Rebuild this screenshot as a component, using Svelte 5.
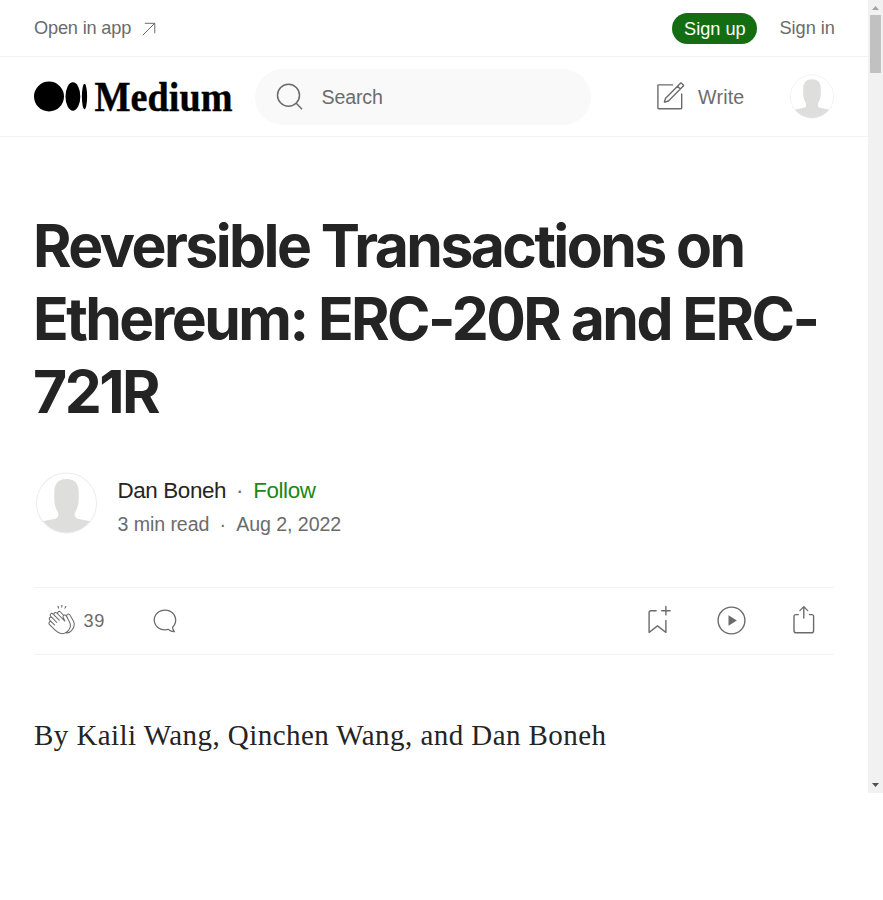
<script>
  const titleLines = ['Reversible Transactions on', 'Ethereum: ERC-20R and ERC-', '721R'];
</script>

{#snippet avatar()}
  <svg class="avatar" viewBox="0 0 60 60" aria-hidden="true">
    <defs><clipPath id="round"><circle cx="30" cy="30" r="29.5" /></clipPath></defs>
    <circle cx="30" cy="30" r="29.5" fill="#fff" />
    <path clip-path="url(#round)" fill="#dededd" d="M30 6.500c-8.500 0-12 5-12 13 0 6-.5 13 3 18.500 1.500 3 1.500 6-2 7.500L4 48.500v13h52v-13L41 45.500c-3.500-1.500-3.500-4.500-2-7.500 3.500-5.500 3-12.500 3-18.500 0-8-3.500-13-12-13z" />
    <circle cx="30" cy="30" r="29.500" fill="none" stroke="#ededed" />
  </svg>
{/snippet}

<div class="window">
  <div class="page">
    <header>
      <div class="topbar">
        <a class="open" href="#app">Open in app
          <svg width="14" height="14" viewBox="0 0 14 14"><path d="M.8 13.200L12.500 1.500M2.800 1.300h10v10" fill="none" stroke="currentColor" /></svg>
        </a>
        <nav><button class="signup">Sign up</button><a href="#signin">Sign in</a></nav>
      </div>
      <div class="mainbar">
        <svg class="logo" width="204" height="56" viewBox="0 -8 204 56">
          <circle cx="15" cy="19.500" r="15" />
          <ellipse cx="38.900" cy="19.500" rx="7.400" ry="14.200" />
          <ellipse cx="50.500" cy="19.500" rx="2.600" ry="12.700" />
          <text x="60.500" y="33.500" textLength="138" lengthAdjust="spacingAndGlyphs">Medium</text>
        </svg>
        <div class="search">
          <svg width="34" height="34" viewBox="0 0 34 34"><g fill="none" stroke="currentColor" stroke-width="1.500"><circle cx="15.500" cy="15.200" r="11" /><path d="M23 23l6 6.300" /></g></svg>
          <span>Search</span>
        </div>
        <div class="write">
          <svg width="33.600" height="33.600" viewBox="0 0 24 24">
            <path fill="currentColor" d="M14 4a.5.5 0 0 0 0-1v1zm7 6a.5.5 0 0 0-1 0h1zm-7-7H4v1h10V3zM3 4v16h1V4H3zm1 17h16v-1H4v1zm17-1V10h-1v10h1zm-1 1a1 1 0 0 0 1-1h-1v1zM3 20a1 1 0 0 0 1 1v-1H3zM4 3a1 1 0 0 0-1 1h1V3z" />
            <path fill="none" stroke="currentColor" d="M17.500 4.500l-8.460 8.460a.25.25 0 0 0-.06.1l-.82 2.470c-.07.2.12.38.31.31l2.470-.82a.25.25 0 0 0 .1-.06L19.500 6.500m-2-2l2.320-2.320c.1-.1.26-.1.36 0l1.640 1.640c.1.1.1.26 0 .36L19.500 6.500m-2-2l2 2" />
          </svg>
          <span>Write</span>
        </div>
        <div class="me">{@render avatar()}</div>
      </div>
    </header>

    <article>
      <h1>{#each titleLines as line}<span>{line}</span>{/each}</h1>
      <div class="byline">
        <div class="author">{@render avatar()}</div>
        <div class="details">
          <p class="name"><span>Dan Boneh</span><i>·</i><a class="follow" href="#follow">Follow</a></p>
          <p class="meta"><span>3 min read</span><i>·</i><span>Aug 2, 2022</span></p>
        </div>
      </div>
      <div class="actions">
        <svg class="clap" width="33.600" height="33.600" viewBox="0 0 24 24"><path fill="currentColor" fill-rule="evenodd" d="M11.370.83L12 3.280l.63-2.450h-1.260zM13.920 3.950l1.520-2.100-1.180-.4-.34 2.500zM8.590 1.840l1.520 2.110-.34-2.500-1.180.4zM18.520 18.920a4.230 4.230 0 0 1-2.620 1.330l.41-.37c2.390-2.400 2.860-4.950 1.400-7.630l-.91-1.600-.8-1.670c-.25-.56-.19-.98.21-1.290a.7.7 0 0 1 .55-.13c.28.05.54.23.72.5l2.370 4.160c.97 1.620 1.140 4.230-1.330 6.700zm-11-.44l-4.150-4.150a.83.83 0 0 1 1.170-1.170l2.160 2.160a.37.37 0 0 0 .51-.52l-2.150-2.160L3.600 11.200a.83.83 0 0 1 1.170-1.170l3.430 3.440a.36.36 0 0 0 .52 0 .36.36 0 0 0 0-.52L5.290 9.510l-.97-.97a.83.83 0 0 1 0-1.160.84.84 0 0 1 1.170 0l.97.97 3.440 3.430a.36.36 0 0 0 .51 0 .37.37 0 0 0 0-.52L6.980 7.830a.82.82 0 0 1-.18-.9.82.82 0 0 1 .76-.51c.22 0 .43.09.58.24l5.800 5.790a.37.37 0 0 0 .58-.42L13.400 9.670c-.26-.56-.2-.98.2-1.290a.7.7 0 0 1 .55-.13c.28.05.55.23.73.5l2.200 3.860c1.300 2.380.87 4.590-1.290 6.750a4.650 4.650 0 0 1-4.190 1.370 7.730 7.730 0 0 1-4.070-2.250zm3.230-12.500l2.120 2.110c-.41.5-.47 1.170-.13 1.900l.22.46-3.520-3.530a.81.81 0 0 1-.1-.36c0-.23.09-.43.24-.59a.85.85 0 0 1 1.170 0zm7.360 1.700a1.860 1.860 0 0 0-1.230-.84 1.440 1.440 0 0 0-1.120.27c-.3.24-.5.55-.58.89-.25-.25-.57-.4-.91-.47-.28-.04-.56 0-.82.1l-2.180-2.180a1.560 1.560 0 0 0-2.200 0c-.2.2-.33.44-.4.7a1.560 1.560 0 0 0-2.630.75 1.600 1.600 0 0 0-2.230-.04 1.560 1.560 0 0 0 0 2.200c-.24.1-.5.24-.72.45a1.560 1.560 0 0 0 0 2.200l.52.52a1.560 1.560 0 0 0-.75 2.610L7 19a8.460 8.460 0 0 0 4.480 2.450 5.180 5.180 0 0 0 3.360-.5 4.890 4.890 0 0 0 4.200-1.510c2.750-2.770 2.540-5.740 1.430-7.590L18.100 7.680z" /></svg>
        <span class="count">39</span>
        <svg class="comment" width="33.600" height="33.600" viewBox="0 0 24 24"><path fill="currentColor" d="M18 16.800a7.140 7.140 0 0 0 2.240-5.320c0-4.120-3.530-7.480-8.050-7.480C7.670 4 4 7.360 4 11.480c0 4.130 3.670 7.480 8.200 7.480a8.900 8.900 0 0 0 2.380-.32c.23.2.48.39.75.56 1.060.69 2.200 1.040 3.400 1.040.22 0 .4-.11.48-.29a.5.5 0 0 0-.04-.52 6.400 6.400 0 0 1-1.160-2.650v.02zm-3.120 1.060l-.06-.22-.32.1a8 8 0 0 1-2.300.33c-4.030 0-7.300-2.960-7.300-6.590S8.170 4.900 12.200 4.900c4 0 7.100 2.960 7.100 6.600 0 1.800-.6 3.470-2.020 4.720l-.2.16v.26l.02.3a6.740 6.740 0 0 0 .88 2.400 5.270 5.270 0 0 1-2.170-.86c-.28-.17-.72-.38-.94-.59l.01-.02z" /></svg>
        <div class="tools">
          <svg width="35" height="35" viewBox="0 0 25 25"><path fill="currentColor" d="M18 2.500a.5.5 0 0 1 1 0V5h2.500a.5.5 0 0 1 0 1H19v2.500a.5.5 0 1 1-1 0V6h-2.500a.5.5 0 0 1 0-1H18V2.500zM7 7a1 1 0 0 1 1-1h3.500a.5.5 0 0 0 0-1H8a2 2 0 0 0-2 2v14a.5.5 0 0 0 .8.4l5.700-4.400 5.700 4.400a.5.5 0 0 0 .8-.4v-8.500a.5.5 0 0 0-1 0v7.480l-5.200-4a.5.5 0 0 0-.6 0l-5.200 4V7z" /></svg>
          <svg width="35" height="35" viewBox="0 0 35 35"><circle cx="17.500" cy="17.500" r="13.400" fill="none" stroke="currentColor" stroke-width="1.400" /><path fill="currentColor" d="M14.500 12.200v10.600l8.300-5.300z" /></svg>
          <svg width="33.600" height="33.600" viewBox="0 0 24 24"><path fill="currentColor" fill-rule="evenodd" d="M15.220 4.930a.42.42 0 0 1-.12.13h.01a.45.45 0 0 1-.29.08.52.52 0 0 1-.3-.13L12.500 3v7.070a.5.5 0 0 1-.5.5.5.5 0 0 1-.5-.5V3.020l-2 2a.45.45 0 0 1-.57.04h-.02a.4.4 0 0 1-.16-.3.4.4 0 0 1 .1-.32l2.800-2.800a.5.5 0 0 1 .7 0l2.800 2.790a.42.42 0 0 1 .08.5zm.78 2.140h1.500a2 2 0 0 1 2 2v10a2 2 0 0 1-2 2h-11a2 2 0 0 1-2-2v-10a2 2 0 0 1 2-2H8a.5.5 0 0 1 .35.14c.1.1.15.22.15.35a.5.5 0 0 1-.15.35.5.5 0 0 1-.35.15H6.400c-.5 0-.9.4-.9.9v10.200a.9.9 0 0 0 .9.9h11.200c.5 0 .9-.4.9-.9V8.960c0-.5-.4-.9-.9-.9H16a.5.5 0 0 1 0-1z" /></svg>
        </div>
      </div>
      <p class="body">By Kaili Wang, Qinchen Wang, and Dan Boneh</p>
    </article>
  </div>
  <div class="scrollbar">
    <svg width="15" height="15" viewBox="0 0 15 15"><path fill="#a3a3a3" d="M4 10h7L7.500 6z" /></svg>
    <div class="thumb"></div>
    <svg width="15" height="15" viewBox="0 0 15 15"><path fill="#505050" d="M4 5h7L7.500 9z" /></svg>
  </div>
</div>

<style>
  :global(body) { background: #fff; }
  .window { display: flex; width: 883px; height: 793px; overflow: hidden; font-family: "Liberation Sans", Arial, sans-serif; color: #242424; }
  .page { width: 868px; flex: none; }
  svg { display: block; flex: none; }
  a { color: inherit; text-decoration: none; }
  p { margin: 0; }
  .topbar { box-sizing: border-box; height: 57px; border-bottom: 1px solid #f2f2f2; padding: 1px 33px 0 34px; display: flex; align-items: center; justify-content: space-between; font-size: 18.2px; color: #6b6b6b; }
  .open { display: flex; align-items: center; gap: 11px; letter-spacing: -0.18px; }
  nav { display: flex; align-items: center; gap: 22px; }
  .signup { box-sizing: border-box; width: 85px; height: 31px; padding: 1px 0 0; border: 0; border-radius: 16px; background: #156d12; color: #fff; font: inherit; }
  .mainbar { box-sizing: border-box; height: 80px; border-bottom: 1px solid #f2f2f2; padding: 0 34px; display: flex; align-items: center; color: #6b6b6b; font-size: 19.6px; }
  .logo { fill: #000; }
  .logo text { font: bold 43px "Liberation Serif", serif; stroke: #000; stroke-width: 0.4px; }
  .search { display: flex; align-items: center; gap: 15px; box-sizing: border-box; width: 336px; height: 56px; margin-left: 17px; padding-left: 17.5px; border-radius: 28px; background: #f9f9f9; }
  .search span, .write span { padding-top: 2px; }
  .search span { letter-spacing: -0.15px; }
  .write { display: flex; align-items: center; gap: 12px; margin-left: 61.500px; }
  .write span { letter-spacing: 0.2px; }
  .me { width: 44px; height: 45px; margin-left: auto; }
  .avatar { display: block; width: 100%; height: 100%; }
  article { padding: 0 34px; }
  h1 { margin: 73px 0 0 -1px; font: bold 58.8px/72.8px Inter, sans-serif; letter-spacing: -2.550px; white-space: nowrap; }
  h1 span { display: block; }
  .byline { display: flex; align-items: center; margin-top: 43px; height: 64px; padding-left: 2px; }
  .author { width: 61px; height: 62px; margin-right: 20.500px; }
  .details { padding-top: 9px; }
  .byline p { display: flex; white-space: nowrap; }
  .name { font-size: 22.4px; line-height: 34px; letter-spacing: -0.38px; }
  .meta { font-size: 19.6px; line-height: 33px; color: #6b6b6b; letter-spacing: -0.08px; }
  i { font-style: normal; width: 27px; text-align: center; color: #6b6b6b; }
  .follow { color: #1a8917; }
  .actions { box-sizing: border-box; height: 68px; margin-top: 52px; border: solid #f2f2f2; border-width: 1px 0; display: flex; align-items: center; color: #6b6b6b; padding: 0 13px 1.500px 11px; }
  .count { font-size: 18.2px; margin-left: 5px; padding-top: 2px; letter-spacing: 0.6px; }
  .comment { margin-left: 42.500px; }
  .tools { display: flex; align-items: center; gap: 38.500px; margin-left: auto; }
  .body { margin-top: 60px; font: 29px/40px "Liberation Serif", serif; letter-spacing: 0.440px; white-space: nowrap; }
  .scrollbar { width: 15px; height: 793px; background: #f1f1f1; display: flex; flex-direction: column; }
  .thumb { width: 11px; height: 58px; margin: 0 2px auto; background: #c1c1c1; }
</style>
